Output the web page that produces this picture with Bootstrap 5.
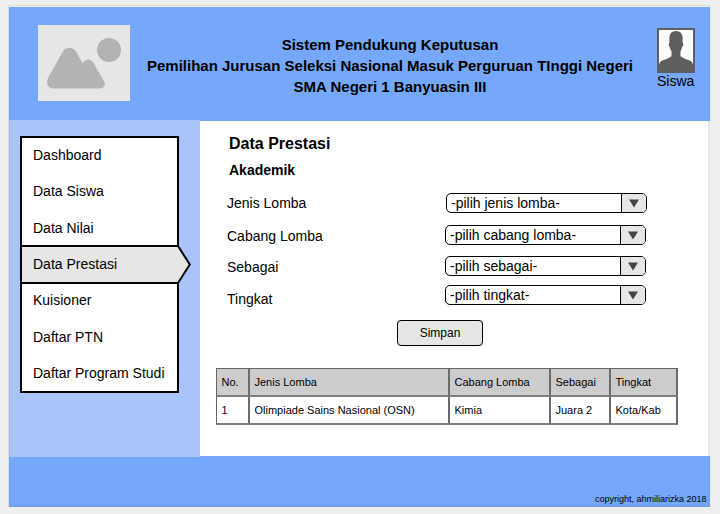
<!DOCTYPE html>
<html lang="id">
<head>
<meta charset="utf-8">
<title>Data Prestasi</title>
<link href="https://cdn.jsdelivr.net/npm/bootstrap@5.3.0/dist/css/bootstrap.min.css" rel="stylesheet">
<style>
html, body { height: 514px; overflow: hidden; }
body { background: #eee; color: #000; font-family: "Liberation Sans", Arial, sans-serif; font-size: 14px; line-height: 20px; padding: 5px 10px 7px 8px; }
.frame { height: 502px; border: 1px solid #ddd; border-width: 1px 0 0 1px; padding-top: 1px; }
.masthead { height: 114px; background: #75a8fb; border-left: 1px solid #6f9fed; border-right: 1px solid #6f9fed; padding: 18px 14px 0 28px; }
.logo-box { width: 92px; height: 76px; background: #e6e6e6; }
.site-title { font-size: 15px; line-height: 21px; font-weight: 700; padding-top: 9px; margin-left: -7px; }
.user-box { width: 38px; padding-top: 3px; line-height: 16px; }
.middle { height: 335px; }
.sidebar { width: 191px; height: 337px; margin-top: -1px; background: #a7c5fb; border-left: 1px solid #9fbbee; padding: 16px 0 0 10px; position: relative; }
.menu-box { width: 159px; height: 257px; border: 2px solid #000; background: #fff; }
.menu-list { margin: -1px 0; height: 255px; }
.menu-list a { flex: 1 1 0; color: #000; padding: 0 0 1px 11px; text-decoration: none; display: flex; align-items: center; position: relative; }
.menu-list span { position: relative; }
.pointer { position: absolute; left: -2px; top: -1.3px; }
.main-panel { border-right: 2px solid #e8e8e8; background: #fff; padding-left: 16px; }
.page-title { font-size: 16px; font-weight: 700; margin: 13px 0 0 13px; line-height: 20px; }
.sub-title { font-size: 14px; font-weight: 700; margin: 6px 0 13px 13px; line-height: 20px; }
.field-row { padding-left: 11px; height: 20px; }
.field-name { width: 218px; padding-top: 1px; }
.row-jenis .field-name { width: 219px; padding-top: 0; }
.row-cabang { margin-top: 12px; }
.row-sebagai { margin-top: 11px; }
.row-tingkat { margin-top: 9px; }
.row-tingkat .field-name { padding-top: 4px; }
.pick { width: 201px; height: 20px; border: 1px solid #000; border-radius: 5px; overflow: hidden; line-height: 18px; background: #fff; }
.pick-text { padding-left: 4px; }
.pick-arrow { width: 25px; border-left: 1px solid #000; background: #e6e6e6; }
.save-btn { width: 86px; height: 26px; margin: 15px 0 22px 181px; border: 1px solid #000; border-radius: 4px; background: #e6e6e6; font-size: 12px; line-height: 24px; padding: 0; color: #000; }
.result { width: 462px; table-layout: fixed; border-collapse: separate; border-spacing: 0; font-size: 11px; line-height: 14px; border-left: 1px solid #666; border-top: 1px solid #666; }
.result th, .result td { font-weight: 400; border-right: 2px solid #6b6b6b; border-bottom: 2px solid #7f7f7f; padding: 0 0 0 4.5px; height: 28px; white-space: nowrap; vertical-align: middle; }
.result th { background: #ccc; }
.col-no { width: 33px; }
.col-jenis { width: 200px; }
.col-cabang { width: 101px; }
.col-sebagai { width: 60px; }
.col-tingkat { width: 67px; }
.foot { height: 51px; background: #75a8fb; border: 1px solid #6f9fed; border-width: 0 1px 2px 1px; font-size: 9px; line-height: 12px; padding: 0 2.5px 0 0; }
</style>
<script src="https://cdn.jsdelivr.net/npm/bootstrap@5.3.0/dist/js/bootstrap.bundle.min.js"></script>
</head>
<body>
<div class="frame">
  <header class="masthead d-flex justify-content-between align-items-start">
    <svg class="logo-box" viewBox="0 0 92 76">
      <circle cx="71" cy="25" r="12" fill="#b3b3b3"/>
      <path d="M24.500 27Q27.500 22.800 31.500 22.800Q35.500 22.800 38.200 27L44.500 38.200Q47.500 34.600 50.200 34.600Q53.500 34.600 55.500 38L66 56Q67.500 59 66.500 61Q65 63.500 61 63.500H16Q11.500 63.300 9.900 60.500Q8.300 57.500 10 53Z" fill="#b3b3b3"/>
    </svg>
    <div class="site-title text-center">Sistem Pendukung Keputusan<br>Pemilihan Jurusan Seleksi Nasional Masuk Perguruan TInggi Negeri<br>SMA Negeri 1 Banyuasin III</div>
    <div class="user-box">
      <svg class="d-block" width="38" height="45" viewBox="0 0 38 45">
        <rect x="1" y="1" width="36" height="43" fill="#fff" stroke="#5f5f5f" stroke-width="2"/>
        <path d="M2 43V37Q2.500 33.500 6 32.300Q14 29.500 14.500 28V23.500Q13 21.500 12.800 19Q11.500 18 11.700 15L12.500 14.500Q11 3 19 3Q27 3 25.500 14.500L26.300 15Q26.500 18 25 19Q24.700 21.500 23.500 23.500V28Q24 29.500 32 32.300Q35.500 33.500 36 37V43Z" fill="#5f5f5f"/>
      </svg>
      <div>Siswa</div>
    </div>
  </header>
  <div class="middle d-flex">
    <aside class="sidebar flex-shrink-0">
      <div class="menu-box">
        <nav class="menu-list d-flex flex-column">
          <a href="#"><span>Dashboard</span></a>
          <a href="#"><span>Data Siswa</span></a>
          <a href="#"><span>Data Nilai</span></a>
          <a href="#">
            <svg class="pointer" width="174" height="40" viewBox="0 0 174 40"><path d="M1 1H158L169.800 19.500L158 38H1Z" fill="#e6e6e6" stroke="#000" stroke-width="2"/></svg>
            <span>Data Prestasi</span></a>
          <a href="#"><span>Kuisioner</span></a>
          <a href="#"><span>Daftar PTN</span></a>
          <a href="#"><span>Daftar Program Studi</span></a>
        </nav>
      </div>
    </aside>
    <main class="main-panel flex-grow-1">
      <h1 class="page-title">Data Prestasi</h1>
      <h2 class="sub-title">Akademik</h2>
      <div class="field-row row-jenis d-flex">
        <div class="field-name">Jenis Lomba</div>
        <div class="pick d-flex"><div class="pick-text flex-grow-1">-pilih jenis lomba-</div><div class="pick-arrow d-flex align-items-center justify-content-center"><svg width="11" height="9"><path d="M0 0.500H10L5 8.500Z" fill="#444"/></svg></div></div>
      </div>
      <div class="field-row row-cabang d-flex">
        <div class="field-name">Cabang Lomba</div>
        <div class="pick d-flex"><div class="pick-text flex-grow-1">-pilih cabang lomba-</div><div class="pick-arrow d-flex align-items-center justify-content-center"><svg width="11" height="9"><path d="M0 0.500H10L5 8.500Z" fill="#444"/></svg></div></div>
      </div>
      <div class="field-row row-sebagai d-flex">
        <div class="field-name">Sebagai</div>
        <div class="pick d-flex"><div class="pick-text flex-grow-1">-pilih sebagai-</div><div class="pick-arrow d-flex align-items-center justify-content-center"><svg width="11" height="9"><path d="M0 0.500H10L5 8.500Z" fill="#444"/></svg></div></div>
      </div>
      <div class="field-row row-tingkat d-flex">
        <div class="field-name">Tingkat</div>
        <div class="pick d-flex"><div class="pick-text flex-grow-1">-pilih tingkat-</div><div class="pick-arrow d-flex align-items-center justify-content-center"><svg width="11" height="9"><path d="M0 0.500H10L5 8.500Z" fill="#444"/></svg></div></div>
      </div>
      <button type="button" class="btn save-btn d-block">Simpan</button>
      <table class="result">
        <colgroup><col class="col-no"><col class="col-jenis"><col class="col-cabang"><col class="col-sebagai"><col class="col-tingkat"></colgroup>
        <thead><tr><th>No.</th><th>Jenis Lomba</th><th>Cabang Lomba</th><th>Sebagai</th><th>Tingkat</th></tr></thead>
        <tbody><tr><td>1</td><td>Olimpiade Sains Nasional (OSN)</td><td>Kimia</td><td>Juara 2</td><td>Kota/Kab</td></tr></tbody>
      </table>
    </main>
  </div>
  <footer class="foot d-flex justify-content-end align-items-end">copyright, ahmiliarizka 2018</footer>
</div>
</body>
</html>
